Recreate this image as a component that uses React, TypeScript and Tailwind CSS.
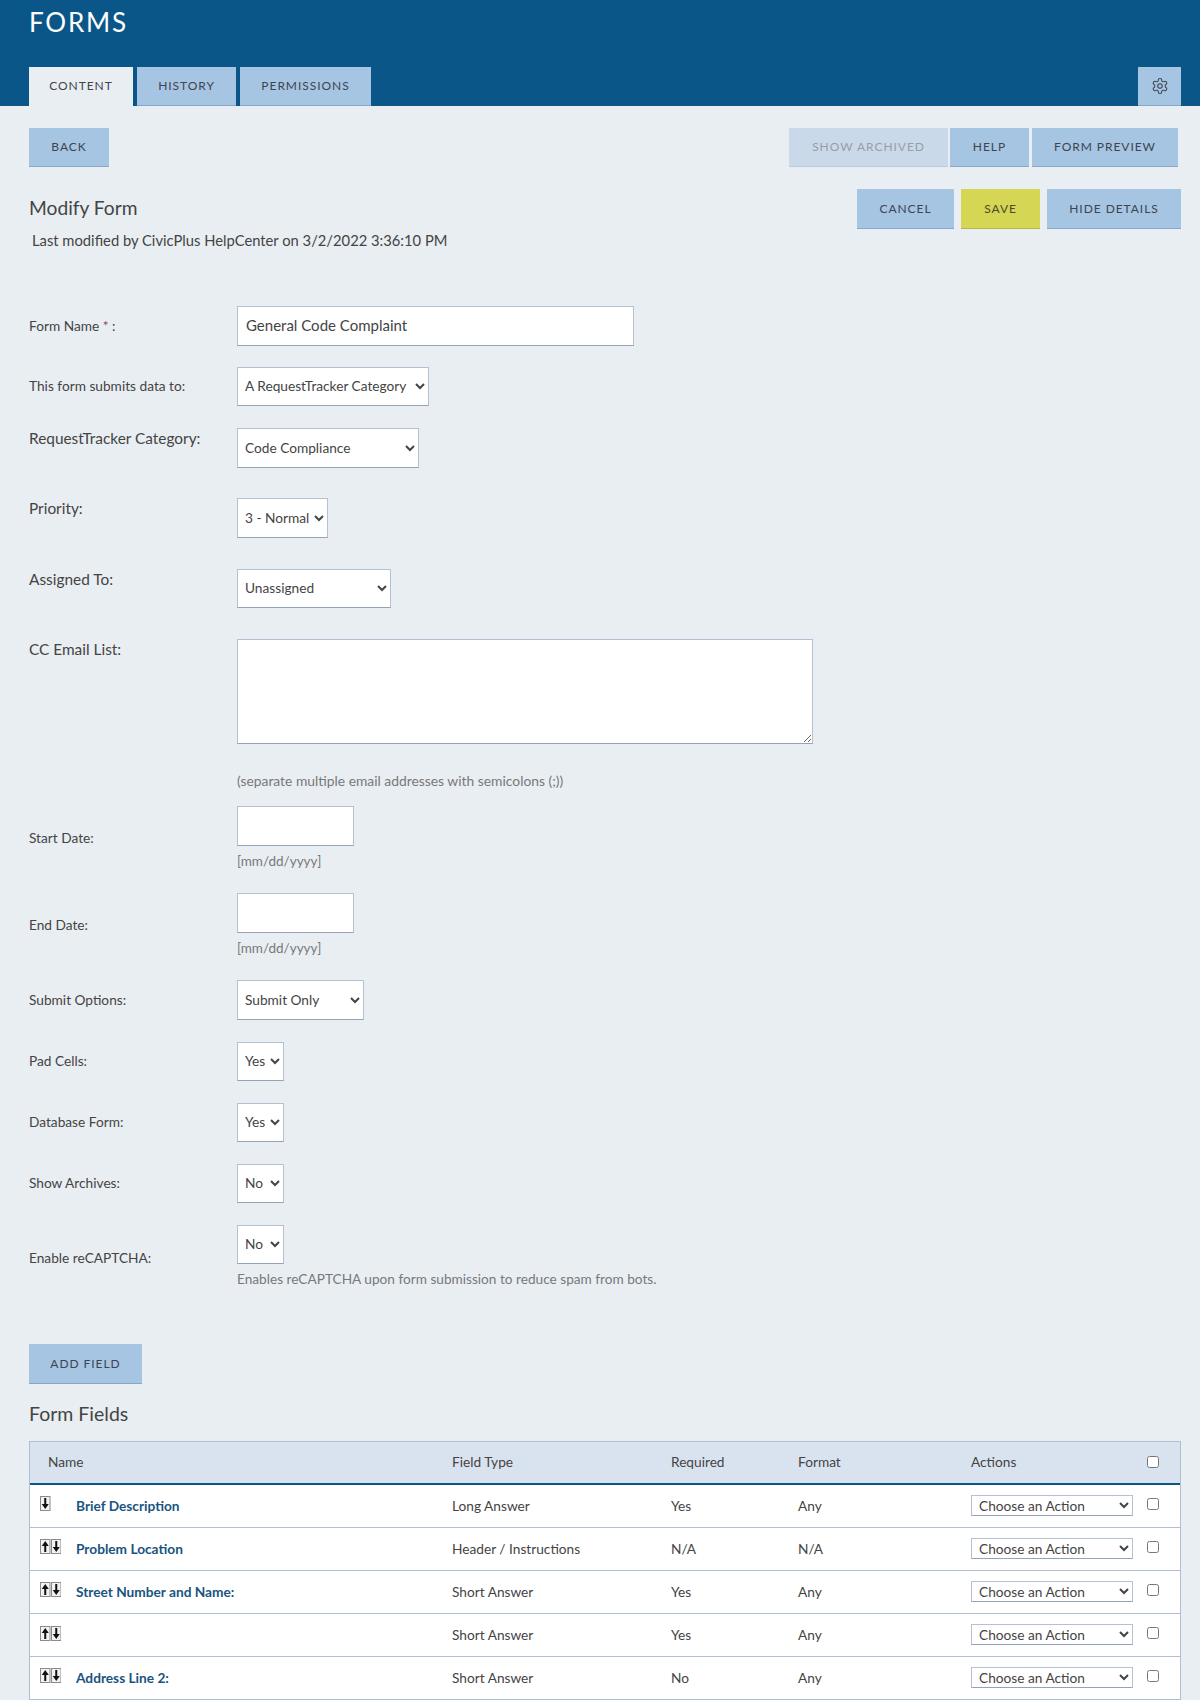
import React from "react";

const font = "font-['Lato','Noto_Sans',sans-serif]";

function Btn({ children, className = "", tone = "blue" }: { children: React.ReactNode; className?: string; tone?: "blue" | "dim" | "yellow" }) {
  const t =
    tone === "blue"
      ? "bg-[#a6c5e3] border-[#88a6c8] text-[#3e4450]"
      : tone === "dim"
        ? "bg-[#c9d9ea] border-[#b8cade] text-[#9a9da2]"
        : "bg-[#d4d654] border-[#b5b74a] text-[#4a4a30]";
  return (
    <button className={`flex items-center justify-center border-b text-[12px] tracking-[0.95px] uppercase ${t} ${className}`}>
      {children}
    </button>
  );
}

function Select({ label, className = "" }: { label: string; className?: string }) {
  return (
    <select defaultValue={label} className={`bg-white border border-[#b4c1d3] border-b-[#94a3b8] text-[13.7px] text-[#444] pl-[3px] pb-[2px] rounded-none ${className}`}>
      <option>{label}</option>
    </select>
  );
}

function Row({ label, children, className = "", labelClass = "text-[13.7px]" }: { label: React.ReactNode; children: React.ReactNode; className?: string; labelClass?: string }) {
  return (
    <div className={`flex items-center ${className}`}>
      <div className={`w-[208px] shrink-0 text-[#444] ${labelClass}`}>{label}</div>
      {children}
    </div>
  );
}

function Arrows({ up }: { up: boolean }) {
  const box = (d: "u" | "d") => (
    <svg width="10.5" height="15" viewBox="0 0 10.5 15" className="block">
      <rect x="0.5" y="0.5" width="9.5" height="14" fill="#f2f2f2" stroke="#8b8b8b" />
      {d === "u" ? <path d="M5.25 2 L8.75 7 H6.25 V13 H4.25 V7 H1.75 Z" fill="#111" /> : <path d="M5.25 13 L8.75 8 H6.25 V2 H4.25 V8 H1.75 Z" fill="#111" />}
    </svg>
  );
  return (
    <div className="flex w-[36px] items-start mt-[-4px]">
      {up ? box("u") : null}
      {box("d")}
    </div>
  );
}

const rows = [
  { up: false, name: "Brief Description", type: "Long Answer", req: "Yes", fmt: "Any" },
  { up: true, name: "Problem Location", type: "Header / Instructions", req: "N/A", fmt: "N/A" },
  { up: true, name: "Street Number and Name:", type: "Short Answer", req: "Yes", fmt: "Any" },
  { up: true, name: "", type: "Short Answer", req: "Yes", fmt: "Any" },
  { up: true, name: "Address Line 2:", type: "Short Answer", req: "No", fmt: "Any" },
];

const fieldBorder = "border border-[#b4c1d3] border-b-[#94a3b8]";
const hint = "text-[#77797c] leading-[18px]";

export default function App() {
  return (
    <div className={`w-[1200px] h-[1700px] overflow-hidden bg-[#e9eef2] ${font}`}>
      <header className="h-[106px] bg-[#0b5688] px-[29px] flex flex-col justify-between">
        <h1 className="text-white text-[26px] font-normal tracking-[1.8px] leading-none pt-[9px]">FORMS</h1>
        <div className="flex items-end justify-between">
          <div className="flex gap-[4px] h-[39px]">
            <Btn className="w-[104px] !bg-[#e9eef2] !border-[#e9eef2]">Content</Btn>
            <Btn className="w-[99px]">History</Btn>
            <Btn className="w-[131px]">Permissions</Btn>
          </div>
          <Btn className="w-[43px] h-[39px] mr-[-10px]">
            <svg width="18" height="18" viewBox="0 0 24 24" fill="none" stroke="#3e4450" strokeWidth="1.4">
              <path d="M12.22 2h-.44a2 2 0 0 0-2 2v.18a2 2 0 0 1-1 1.73l-.43.25a2 2 0 0 1-2 0l-.15-.08a2 2 0 0 0-2.73.73l-.22.38a2 2 0 0 0 .73 2.73l.15.1a2 2 0 0 1 1 1.72v.51a2 2 0 0 1-1 1.74l-.15.09a2 2 0 0 0-.73 2.73l.22.38a2 2 0 0 0 2.73.73l.15-.08a2 2 0 0 1 2 0l.43.25a2 2 0 0 1 1 1.73V20a2 2 0 0 0 2 2h.44a2 2 0 0 0 2-2v-.18a2 2 0 0 1 1-1.73l.43-.25a2 2 0 0 1 2 0l.15.08a2 2 0 0 0 2.73-.73l.22-.39a2 2 0 0 0-.73-2.73l-.15-.08a2 2 0 0 1-1-1.74v-.5a2 2 0 0 1 1-1.74l.15-.09a2 2 0 0 0 .73-2.73l-.22-.38a2 2 0 0 0-2.73-.73l-.15.08a2 2 0 0 1-2 0l-.43-.25a2 2 0 0 1-1-1.73V4a2 2 0 0 0-2-2z" />
              <circle cx="12" cy="12" r="3" />
            </svg>
          </Btn>
        </div>
      </header>

      <main className="pl-[29px] pr-[19px]">
        <div className="flex justify-between pt-[22px] h-[83px]">
          <Btn className="w-[80px] h-[39px]">Back</Btn>
          <div className="flex h-[39px] pr-[3px]">
            <Btn tone="dim" className="w-[159px] mr-[2px]">Show Archived</Btn>
            <Btn className="w-[79px] mr-[3px]">Help</Btn>
            <Btn className="w-[146px]">Form Preview</Btn>
          </div>
        </div>
        <div className="flex justify-between h-[117px]">
          <div>
            <h2 className="text-[19.2px] text-[#444] leading-[38px]">Modify Form</h2>
            <p className="text-[14.75px] text-[#444] pl-[3px] leading-[20px] pt-[3px]">Last modified by CivicPlus HelpCenter on 3/2/2022 3:36:10 PM</p>
          </div>
          <div className="flex gap-[7px] h-[40px]">
            <Btn className="w-[97px]">Cancel</Btn>
            <Btn tone="yellow" className="w-[79px]">Save</Btn>
            <Btn className="w-[134px]">Hide Details</Btn>
          </div>
        </div>

        <Row label={<span>Form Name <span className="text-[#a33a5e]">*</span> :</span>} className="h-[40px]">
          <input defaultValue="General Code Complaint" className={`w-[397px] h-[40px] bg-white ${fieldBorder} px-[8px] pb-[2px] text-[15px] text-[#444]`} />
        </Row>
        <Row label="This form submits data to:" className="mt-[21px] h-[39px]">
          <Select label="A RequestTracker Category" className="w-[192px] h-[39px]" />
        </Row>
        <Row label="RequestTracker Category:" labelClass="text-[15.4px] leading-[20px] self-start" className="mt-[22px] h-[40px]">
          <Select label="Code Compliance" className="w-[182px] h-[40px]" />
        </Row>
        <Row label="Priority:" labelClass="text-[15.4px] leading-[20px] self-start" className="mt-[30px] h-[40px]">
          <Select label="3 - Normal" className="w-[91px] h-[40px]" />
        </Row>
        <Row label="Assigned To:" labelClass="text-[15.4px] leading-[20px] self-start" className="mt-[31px] h-[39px]">
          <Select label="Unassigned" className="w-[154px] h-[39px]" />
        </Row>
        <div className="flex mt-[31px]">
          <div className="w-[208px] shrink-0 text-[15.4px] leading-[20px] text-[#444]">CC Email List:</div>
          <div>
            <textarea className={`block w-[576px] h-[105px] bg-white ${fieldBorder}`} />
            <p className={`${hint} text-[13.85px] mt-[28px]`}>(separate multiple email addresses with semicolons (;))</p>
          </div>
        </div>
        <div className="flex mt-[16px] items-start">
          <div className="w-[208px] shrink-0 text-[13.7px] text-[#444] leading-[20px] pt-[22px]">Start Date:</div>
          <div>
            <input className={`block w-[117px] h-[40px] bg-white ${fieldBorder}`} />
            <p className={`${hint} text-[13.5px] mt-[6px]`}>[mm/dd/yyyy]</p>
          </div>
        </div>
        <div className="flex mt-[23px] items-start">
          <div className="w-[208px] shrink-0 text-[13.7px] text-[#444] leading-[20px] pt-[22px]">End Date:</div>
          <div>
            <input className={`block w-[117px] h-[40px] bg-white ${fieldBorder}`} />
            <p className={`${hint} text-[13.5px] mt-[6px]`}>[mm/dd/yyyy]</p>
          </div>
        </div>
        <Row label="Submit Options:" className="mt-[23px] h-[40px]">
          <Select label="Submit Only" className="w-[127px] h-[40px]" />
        </Row>
        <Row label="Pad Cells:" className="mt-[22px] h-[39px]">
          <Select label="Yes" className="w-[47px] h-[39px]" />
        </Row>
        <Row label="Database Form:" className="mt-[22px] h-[39px]">
          <Select label="Yes" className="w-[47px] h-[39px]" />
        </Row>
        <Row label="Show Archives:" className="mt-[22px] h-[39px]">
          <Select label="No" className="w-[47px] h-[39px]" />
        </Row>
        <div className="flex mt-[22px] items-start">
          <div className="w-[208px] shrink-0 text-[13.7px] text-[#444] pt-[23px]">Enable reCAPTCHA:</div>
          <div>
            <Select label="No" className="block w-[47px] h-[39px]" />
            <p className={`${hint} text-[13.65px] mt-[6px]`}>Enables reCAPTCHA upon form submission to reduce spam from bots.</p>
          </div>
        </div>

        <Btn className="w-[113px] h-[40px] mt-[56px]">Add Field</Btn>
        <h2 className="text-[19.5px] text-[#444] leading-[24px] mt-[18px]">Form Fields</h2>

        <div className="mt-[15px] border border-[#b0bfd0] border-b-0 bg-white text-[13.7px] text-[#444]">
          <div className="flex items-center h-[43px] pb-[1px] bg-[#d9e3ef] border-b-[2px] border-[#0b5688]">
            <div className="w-[422px] pl-[18px] shrink-0">Name</div>
            <div className="w-[219px] shrink-0">Field Type</div>
            <div className="w-[127px] shrink-0">Required</div>
            <div className="w-[173px] shrink-0">Format</div>
            <div className="w-[176px] shrink-0">Actions</div>
            <input type="checkbox" className="w-[12px] h-[12px]" />
          </div>
          {rows.map((r, i) => (
            <div key={i} className="flex items-center h-[43px] border-b border-[#b0bfd0]">
              <div className="w-[422px] pl-[10px] shrink-0 flex items-center">
                <Arrows up={r.up} />
                <span className="font-bold text-[#1a5480]">{r.name}</span>
              </div>
              <div className="w-[219px] shrink-0">{r.type}</div>
              <div className="w-[127px] shrink-0">{r.req}</div>
              <div className="w-[173px] shrink-0">{r.fmt}</div>
              <div className="w-[176px] shrink-0">
                <select className={`block w-[162px] h-[21px] mt-[-2px] bg-white ${fieldBorder} pl-[3px] text-[13.7px] text-[#444] rounded-none`}>
                  <option>Choose an Action</option>
                </select>
              </div>
              <input type="checkbox" className="w-[12px] h-[12px] mt-[-4px]" />
            </div>
          ))}
        </div>
      </main>
    </div>
  );
}
